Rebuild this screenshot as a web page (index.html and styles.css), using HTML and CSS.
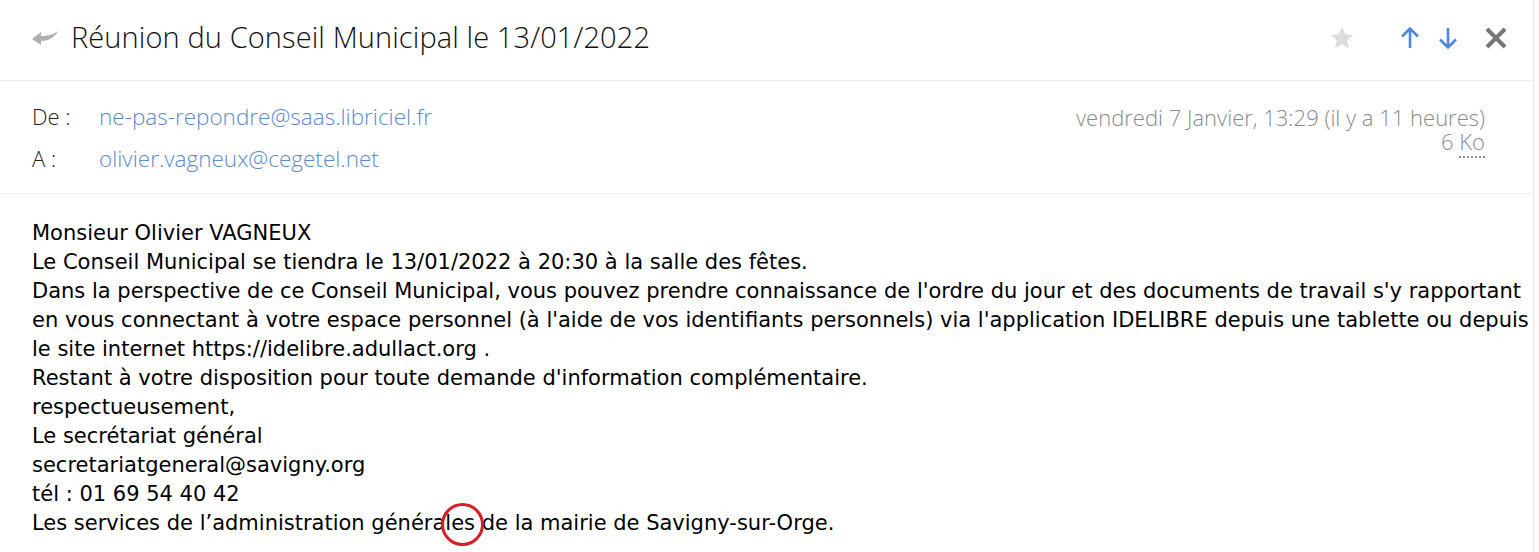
FILE: index.html
```html
<!DOCTYPE html>
<html lang="fr">
<head>
    <meta charset="UTF-8">
    <title>Réunion du Conseil Municipal le 13/01/2022</title>
    <link rel="stylesheet" href="styles.css">
</head>
<body>
    <div class="mail-panel">
        <header class="mail-top">
            <svg class="icon-reply" viewBox="0 0 28 16" width="28" height="16">
                <path d="M1 10 L10 3 L10 7 C16 7 22 6 27 2 C24 8 18 12 10 12 L10 16 Z" fill="#b0b0b0"/>
            </svg>
            <h1 class="mail-subject">Réunion du Conseil Municipal le 13/01/2022</h1>
            <div class="mail-actions">
                <svg class="icon-star" viewBox="0 0 24 24" width="26" height="26">
                    <path d="M12 1.5 L14.9 8.6 L22.5 9.2 L16.7 14.1 L18.5 21.6 L12 17.6 L5.5 21.6 L7.3 14.1 L1.5 9.2 L9.1 8.6 Z" fill="#dcdcdc"/>
                </svg>
                <svg class="icon-nav" viewBox="0 0 20 24" width="20" height="24">
                    <path d="M10 22 V3 M2 10.5 L10 2.5 L18 10.5" fill="none" stroke="#4a87e6" stroke-width="2.6"/>
                </svg>
                <svg class="icon-nav" viewBox="0 0 20 24" width="20" height="24">
                    <path d="M10 2 V21 M2 13.5 L10 21.5 L18 13.5" fill="none" stroke="#4a87e6" stroke-width="2.6"/>
                </svg>
                <svg class="icon-close" viewBox="0 0 24 24" width="24" height="24">
                    <path d="M3 3 L21 21 M21 3 L3 21" fill="none" stroke="#777" stroke-width="4"/>
                </svg>
            </div>
        </header>

        <section class="mail-meta">
            <div class="meta-people">
                <div class="meta-row"><span class="meta-label">De :</span><a class="meta-addr">ne-pas-repondre@saas.libriciel.fr</a></div>
                <div class="meta-row"><span class="meta-label">A :</span><a class="meta-addr">olivier.vagneux@cegetel.net</a></div>
            </div>
            <div class="meta-info">
                <div class="meta-date">vendredi 7 Janvier, 13:29 (il y a 11 heures)</div>
                <div class="meta-size">6 <abbr class="size-unit">Ko</abbr></div>
            </div>
        </section>

        <div class="mail-body">
            Monsieur Olivier VAGNEUX<br>
            Le Conseil Municipal se tiendra le 13/01/2022 à 20:30 à la salle des fêtes.<br>
            Dans la perspective de ce Conseil Municipal, vous pouvez prendre connaissance de l'ordre du jour et des documents de travail s'y rapportant<br>
            en vous connectant à votre espace personnel (à l'aide de vos identifiants personnels) via l'application IDELIBRE depuis une tablette ou depuis<br>
            le site internet https://idelibre.adullact.org .<br>
            Restant à votre disposition pour toute demande d'information complémentaire.<br>
            respectueusement,<br>
            Le secrétariat général<br>
            secretariatgeneral@savigny.org<br>
            tél : 01 69 54 40 42<br>
            Les services de l’administration générales de la mairie de Savigny-sur-Orge.
        </div>

        <span class="annot-circle"></span>
    </div>
</body>
</html>
```

FILE: styles.css
```css
:root {
    --line-color: #ececec;
    --link-blue: #5b8bd0;
    --text-gray: #8a8a8a;
    --text-dark: #111;
}
*, *::before, *::after { box-sizing: border-box; }
body { margin: 0; background: #fff; color: var(--text-dark); }
.mail-panel { position: relative; width: 1534px; height: 552px; border-right: 1px solid #e6e6e6; overflow: hidden; }

.mail-top { display: flex; align-items: center; height: 81px; padding: 0 25px 8px 31px; border-bottom: 1px solid var(--line-color); }
.icon-reply { flex-shrink: 0; margin-right: 12px; margin-top: 2px; }
.mail-subject { margin: 0; font-family: "Open Sans", sans-serif; font-weight: 300; font-size: 29px; letter-spacing: 0.1px; color: #111; }
.mail-actions { margin-left: auto; display: flex; align-items: center; gap: 18px; margin-top: 4px; }
.icon-star { margin-right: 27px; }
.icon-close { margin-left: 8px; }

.mail-meta { display: flex; justify-content: space-between; height: 113px; padding: 14px 48px 0 32px; border-bottom: 1px solid var(--line-color); font-family: "Open Sans", sans-serif; font-size: 22px; font-weight: 300; }
.meta-row { display: flex; height: 42px; align-items: center; }
.meta-label { width: 67px; color: #222; }
.meta-addr { color: var(--link-blue); text-decoration: none; font-size: 22.5px; }
.meta-info { text-align: right; color: var(--text-gray); padding-top: 10px; }
.meta-date, .meta-size { line-height: 24px; height: 24px; }
.size-unit { text-decoration: none; border-bottom: 2px dotted var(--text-gray); }

.mail-body { padding: 25px 0 0 32px; white-space: nowrap; font-family: "DejaVu Sans", sans-serif; font-size: 21px; line-height: 29px; color: #000; }

.annot-circle { position: absolute; left: 441px; top: 503px; width: 43px; height: 43px; border: 3px solid #d41f26; border-radius: 50%; }
```
